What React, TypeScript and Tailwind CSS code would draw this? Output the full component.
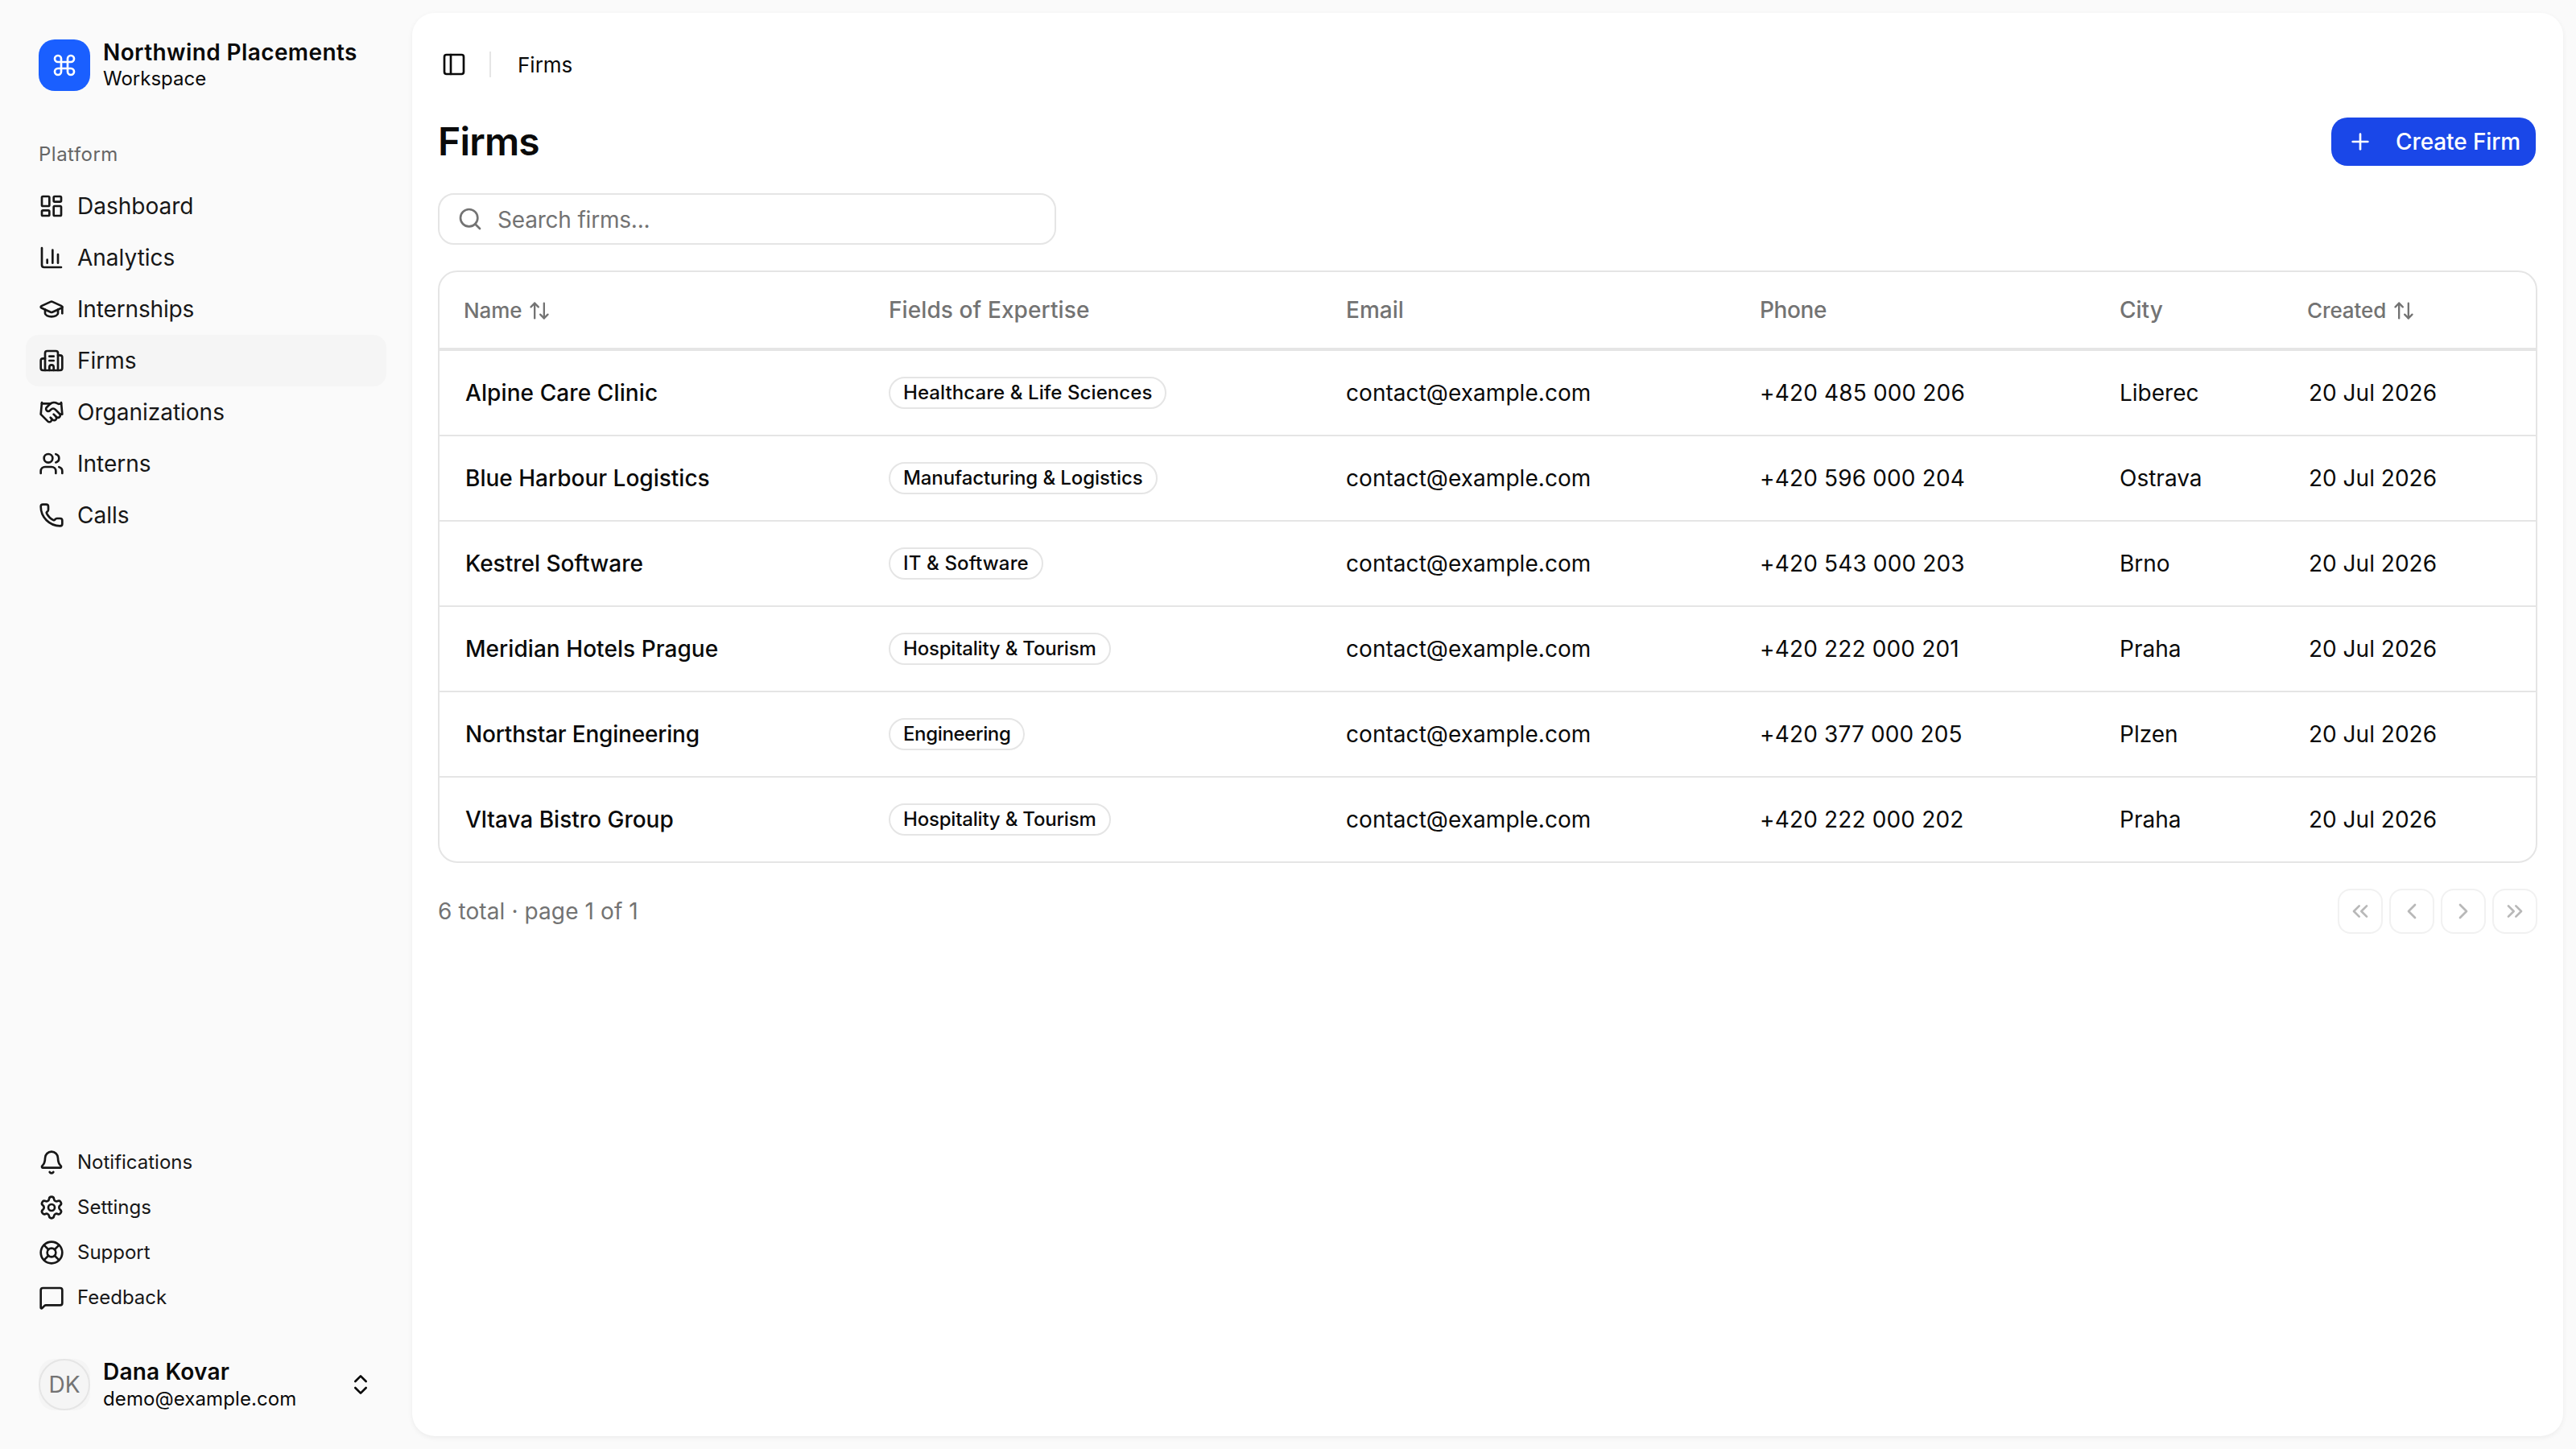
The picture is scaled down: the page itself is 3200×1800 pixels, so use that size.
import {
  ArrowUpDown,
  Bell,
  Building2,
  ChartColumn,
  ChevronLeft,
  ChevronRight,
  ChevronsLeft,
  ChevronsRight,
  ChevronsUpDown,
  Command,
  GraduationCap,
  Handshake,
  LayoutDashboard,
  LifeBuoy,
  MessageSquare,
  PanelLeft,
  Phone,
  Plus,
  Search,
  Settings,
  Users,
} from 'lucide-react';

const platformNav = [
  { label: 'Dashboard', icon: LayoutDashboard },
  { label: 'Analytics', icon: ChartColumn },
  { label: 'Internships', icon: GraduationCap, fit: 'tracking-[-0.15px]' },
  { label: 'Firms', icon: Building2, active: true },
  { label: 'Organizations', icon: Handshake },
  { label: 'Interns', icon: Users },
  { label: 'Calls', icon: Phone },
];

const secondaryNav = [
  { label: 'Notifications', icon: Bell },
  { label: 'Settings', icon: Settings },
  { label: 'Support', icon: LifeBuoy },
  { label: 'Feedback', icon: MessageSquare },
];

// nameFit / fieldFit nudge the letter spacing so each label ends where it does in the design
const firms = [
  { name: 'Alpine Care Clinic', nameFit: 'tracking-[0.1px]', field: 'Healthcare & Life Sciences', fieldFit: 'tracking-[0.08px]', phone: '+420 485 000 206', city: 'Liberec' },
  { name: 'Blue Harbour Logistics', nameFit: '', field: 'Manufacturing & Logistics', fieldFit: 'tracking-[-0.08px]', phone: '+420 596 000 204', city: 'Ostrava' },
  { name: 'Kestrel Software', nameFit: '', field: 'IT & Software', fieldFit: 'tracking-[0.15px]', phone: '+420 543 000 203', city: 'Brno' },
  { name: 'Meridian Hotels Prague', nameFit: 'tracking-[0.05px]', field: 'Hospitality & Tourism', fieldFit: 'tracking-[-0.2px]', phone: '+420 222 000 201', city: 'Praha' },
  { name: 'Northstar Engineering', nameFit: 'tracking-[-0.2px]', field: 'Engineering', fieldFit: 'tracking-[-0.36px]', phone: '+420 377 000 205', city: 'Plzen' },
  { name: 'Vltava Bistro Group', nameFit: '', field: 'Hospitality & Tourism', fieldFit: 'tracking-[-0.2px]', phone: '+420 222 000 202', city: 'Praha' },
];

function Sidebar() {
  return (
    <aside className="flex h-full w-[512px] shrink-0 flex-col px-[32px] pt-[48px] pb-[48px]">
      <div className="flex items-center gap-[16px] px-[16px]">
        <div className="flex h-[64px] w-[64px] items-center justify-center rounded-[20px] bg-[#1a5fff] text-white">
          <Command size={32} />
        </div>
        <div className="flex flex-col">
          <span className="text-[28px] leading-[34px] font-semibold tracking-[0.4px] text-[#0a0a0a]">Northwind Placements</span>
          <span className="text-[24px] leading-[32px] text-[#0a0a0a]">Workspace</span>
        </div>
      </div>

      <div className="mt-[46px] flex h-[64px] items-center px-[16px] text-[24px] tracking-[0.5px] text-[#666666]">Platform</div>
      <nav className="flex flex-col">
        {platformNav.map((item) => (
          <a
            key={item.label}
            className={`flex h-[64px] items-center gap-[16px] rounded-[16px] px-[16px] text-[28px] text-[#171717] ${item.active ? 'bg-[#f5f5f5]' : ''} ${item.fit ?? ''}`}
          >
            <item.icon size={32} className="shrink-0" />
            <span>{item.label}</span>
          </a>
        ))}
      </nav>

      <nav className="mt-auto flex flex-col">
        {secondaryNav.map((item) => (
          <a key={item.label} className="flex h-[56px] items-center gap-[16px] px-[16px] text-[24px] text-[#171717]">
            <item.icon size={32} className="shrink-0" />
            <span>{item.label}</span>
          </a>
        ))}
      </nav>

      <div className="mt-[48px] flex h-[64px] items-center gap-[16px] pr-[16px] pl-[16px]">
        <div className="h-[64px] w-[64px] rounded-[20px] bg-[#f5f5f5]">
          <div className="flex h-full w-full items-center justify-center rounded-full border-2 border-[#e5e5e5] text-[28px] text-[#737373]">
            DK
          </div>
        </div>
        <div className="flex flex-1 flex-col self-start">
          <span className="text-[28px] leading-[32px] font-semibold tracking-[0.2px] text-[#0a0a0a]">Dana Kovar</span>
          <span className="mt-[2px] text-[24px] leading-[32px] tracking-[0.1px] text-[#0a0a0a]">demo@example.com</span>
        </div>
        <ChevronsUpDown size={32} className="text-[#0a0a0a]" />
      </div>
    </aside>
  );
}

function SortHeader({ label }: { label: string }) {
  return (
    <span className="-ml-[2px] inline-flex items-center gap-[8px] text-[26px] tracking-[-0.1px]">
      {label}
      <ArrowUpDown size={28} />
    </span>
  );
}

function rowClass(i: number) {
  // collapsed borders straddle the row edge, so first and last rows differ by a pixel
  if (i === 0) return 'h-[107px] border-b-2 border-[#e5e5e5]';
  if (i === firms.length - 1) return 'h-[105px]';
  return 'h-[106px] border-b-2 border-[#e5e5e5]';
}

function FirmsTable() {
  return (
    <div className="mt-[32px] overflow-hidden rounded-[24px] border-2 border-[#e5e5e5]">
      <table className="w-full table-fixed border-collapse text-left text-[28px]">
        <colgroup>
          <col className="w-[526px]" />
          <col className="w-[568px]" />
          <col className="w-[514px]" />
          <col className="w-[447px]" />
          <col className="w-[235px]" />
          <col />
        </colgroup>
        <thead>
          <tr className="h-[96px] border-b-4 border-[#e5e5e5] text-[#737373]">
            <th className="px-[32px] font-medium"><SortHeader label="Name" /></th>
            <th className="px-[32px] font-medium tracking-[0.1px]">Fields of Expertise</th>
            <th className="px-[32px] font-medium">Email</th>
            <th className="px-[32px] font-medium tracking-[-0.4px]">Phone</th>
            <th className="px-[32px] font-medium">City</th>
            <th className="px-[32px] font-medium"><SortHeader label="Created" /></th>
          </tr>
        </thead>
        <tbody className="text-[#0a0a0a]">
          {firms.map((firm, i) => (
            <tr key={firm.name} className={rowClass(i)}>
              <td className={`px-[32px] font-medium ${firm.nameFit}`}>{firm.name}</td>
              <td className="px-[32px]">
                <div className="flex">
                  <span className={`flex h-[40px] items-center rounded-full border-2 border-[#e5e5e5] px-[16px] text-[24px] font-medium ${firm.fieldFit}`}>
                    {firm.field}
                  </span>
                </div>
              </td>
              <td className="px-[32px] tracking-[0.05px]">contact@example.com</td>
              <td className="px-[32px] tracking-[0.15px]">{firm.phone}</td>
              <td className="px-[32px]">{firm.city}</td>
              <td className="px-[32px]">20 Jul 2026</td>
            </tr>
          ))}
        </tbody>
      </table>
    </div>
  );
}

function PageButton({ icon: Icon }: { icon: typeof ChevronLeft }) {
  return (
    <button className="flex h-[56px] w-[56px] items-center justify-center rounded-[16px] border-2 border-[#e5e5e5] bg-white text-[#737373] opacity-50">
      <Icon size={32} />
    </button>
  );
}

export default function App() {
  return (
    <div className="flex h-screen w-full bg-[#fafafa] font-['Inter',sans-serif]">
      <Sidebar />
      <main className="my-[16px] mr-[16px] flex-1 rounded-[28px] bg-white px-[32px] pt-[48px] shadow-[0_2px_6px_rgba(0,0,0,0.06)]">
        <header className="flex h-[32px] items-center">
          <PanelLeft size={32} className="ml-[4px] text-[#0a0a0a]" />
          <div className="mx-[28px] h-[32px] w-[2px] bg-[#e5e5e5]" />
          <span className="ml-[5px] text-[26px] text-[#0a0a0a]">Firms</span>
        </header>

        <div className="mt-[50px] flex h-[60px] items-center justify-between">
          <h1 className="text-[48px] leading-[60px] font-semibold tracking-[-0.8px] text-[#0a0a0a]">Firms</h1>
          <button className="mr-[2px] flex h-[60px] w-[254px] items-center gap-[28px] rounded-[20px] bg-[#1a47e8] pl-[20px] text-[28px] font-medium tracking-[-0.1px] whitespace-nowrap text-white">
            <Plus size={32} />
            Create Firm
          </button>
        </div>

        <div className="mt-[34px] flex h-[64px] w-[768px] items-center gap-[18px] rounded-[20px] border-2 border-[#e5e5e5] px-[22px] text-[28px] tracking-[-0.2px] text-[#737373]">
          <Search size={32} />
          <span className="pt-[2px]">Search firms...</span>
        </div>

        <FirmsTable />

        <div className="mt-[32px] flex items-center justify-between">
          <span className="text-[28px] tracking-[0.1px] text-[#737373]">6 total · page 1 of 1</span>
          <div className="flex gap-[8px]">
            <PageButton icon={ChevronsLeft} />
            <PageButton icon={ChevronLeft} />
            <PageButton icon={ChevronRight} />
            <PageButton icon={ChevronsRight} />
          </div>
        </div>
      </main>
    </div>
  );
}
